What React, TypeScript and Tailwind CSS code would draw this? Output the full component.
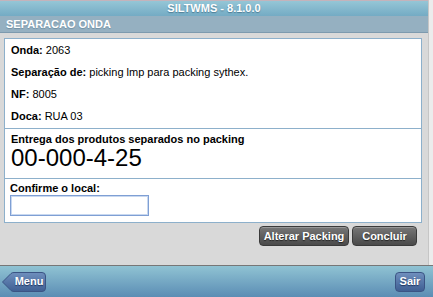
import React from 'react'

const font = { fontFamily: '"Liberation Sans", Arial, sans-serif' }

function Row({ label, value }: { label: string; value: string }) {
  return (
    <div className="h-[22px] leading-[22px] text-[11px] text-black">
      <span className="font-bold">{label}</span> {value}
    </div>
  )
}

function GrayButton({ children, w }: { children: React.ReactNode; w: string }) {
  return (
    <button
      className={`${w} h-[20px] rounded-[4px] border border-[#3a3a3a] bg-gradient-to-b from-[#777777] to-[#4a4a4a] text-[11px] font-bold text-white [text-shadow:0_1px_1px_#222] shadow-[inset_0_1px_0_rgba(255,255,255,0.25)]`}
    >
      {children}
    </button>
  )
}

export default function App() {
  return (
    <div className="w-[433px] h-[297px] flex flex-col bg-[#d9d9d9] overflow-hidden" style={font}>
      <div className="flex h-[265px]">
        {/* main column */}
        <div className="w-[428px] flex flex-col">
          {/* title bar */}
          <div className="h-[16px] border-t border-[#c4b3bb] bg-gradient-to-b from-[#95c6d6] to-[#74abc4] flex items-center justify-center text-[11px] font-bold text-white [text-shadow:0_1px_1px_#4d7c94]">
            SILTWMS - 8.1.0.0
          </div>
          {/* page bar */}
          <div className="h-[17px] bg-[#95b0c1] border-b border-[#7d9aae] flex items-center px-[6px] text-[11px] font-bold text-white [text-shadow:0_1px_1px_#6f8ea2]">
            SEPARACAO ONDA
          </div>

          {/* content */}
          <div className="flex-1 pt-[5px] pl-[4px] pr-[6px] flex flex-col">
            <div className="h-[185px] bg-white border border-[#8db0cb] flex flex-col">
              <div className="px-[6px] pb-[1px] border-b border-[#8db0cb]">
                <Row label="Onda:" value="2063" />
                <Row label="Separação de:" value="picking lmp para packing sythex." />
                <Row label="NF:" value="8005" />
                <Row label="Doca:" value="RUA 03" />
              </div>
              <div className="px-[6px] pt-[3px] pb-[8px] border-b border-[#8db0cb]">
                <div className="leading-[14px] text-[11px] font-bold text-black">Entrega dos produtos separados no packing</div>
                <div className="leading-[24px] text-[24px] text-black">00-000-4-25</div>
              </div>
              <div className="px-[5px] pt-[2px] flex flex-col">
                <div className="leading-[14px] text-[11px] font-bold text-black">Confirme o local:</div>
                <input
                  className="w-[139px] h-[21px] border border-[#7f9fd4] bg-white outline-none shadow-[inset_0_0_0_1px_#c8d8f0]"
                  style={font}
                />
              </div>
            </div>

            <div className="flex justify-end gap-[3px] pt-[3px] pr-[5px]">
              <GrayButton w="w-[90px]">Alterar Packing</GrayButton>
              <GrayButton w="w-[65px]">Concluir</GrayButton>
            </div>
          </div>
        </div>
        {/* scroll edge */}
        <div className="w-[5px] bg-[#ececec] border-l border-[#c6c6c6]" />
      </div>

      {/* footer */}
      <div className="h-[32px] border-t border-[#777777] bg-gradient-to-b from-[#90c3d3] to-[#5b8db4] flex items-center justify-between pl-[2px] pr-[8px]">
        <div className="relative w-[44px] h-[20px]">
          <svg width="44" height="20" viewBox="0 0 44 20" className="absolute inset-0">
            <defs>
              <linearGradient id="mb" x1="0" y1="0" x2="0" y2="1">
                <stop offset="0" stopColor="#6f8fbd" />
                <stop offset="1" stopColor="#3f5f93" />
              </linearGradient>
            </defs>
            <path d="M0.5 10 L9 1.5 Q10 0.5 12 0.5 L40 0.5 Q43.5 0.5 43.5 4 L43.5 16 Q43.5 19.5 40 19.5 L12 19.5 Q10 19.5 9 18.5 Z" fill="url(#mb)" stroke="#3b5484" />
          </svg>
          <span className="absolute inset-0 pl-[10px] flex items-center justify-center text-[11px] font-bold text-white [text-shadow:0_1px_1px_#1f3560]">
            Menu
          </span>
        </div>
        <button className="w-[30px] h-[20px] rounded-[4px] border border-[#3b5484] bg-gradient-to-b from-[#6f8fbd] to-[#3f5f93] text-[11px] font-bold text-white [text-shadow:0_1px_1px_#1f3560]">
          Sair
        </button>
      </div>
    </div>
  )
}
